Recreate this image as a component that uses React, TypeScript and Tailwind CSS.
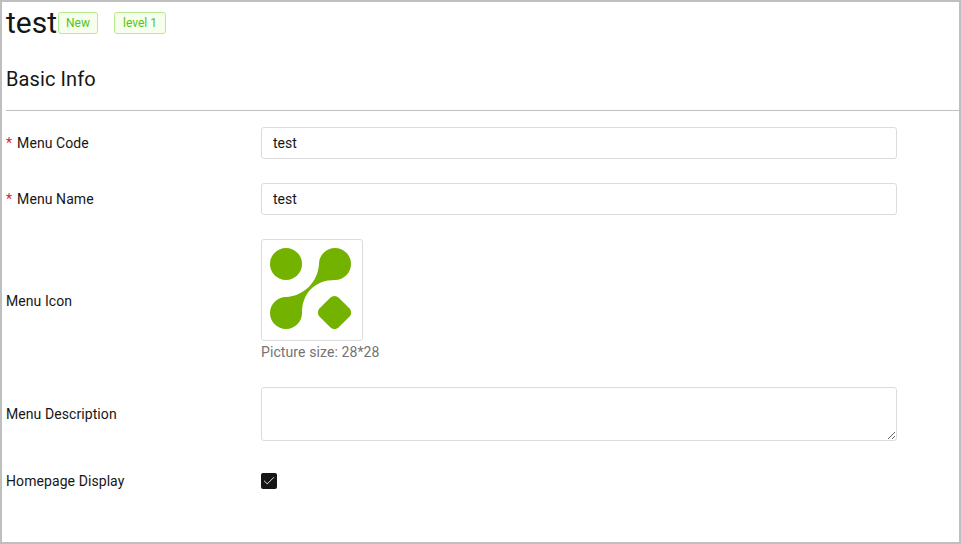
import { Check } from "lucide-react";

function Tag({ children, className }: { children: string; className?: string }) {
  return (
    <span
      className={`flex h-[22px] items-center justify-center rounded-[3px] border border-[#b7eb8f] bg-[#f6ffed] text-xs text-[#52c41a] ${className ?? ""}`}
    >
      {children}
    </span>
  );
}

function Row({
  label,
  required,
  children,
  className,
}: {
  label: string;
  required?: boolean;
  children: React.ReactNode;
  className?: string;
}) {
  return (
    <div className={`flex items-center ${className ?? ""}`}>
      <label className="w-[255px] shrink-0 text-sm tracking-[0.08px] text-[#161616]">
        {required && <span className="mr-[5px] text-[#da1e28]">*</span>}
        {label}
      </label>
      {children}
    </div>
  );
}

function TextBox({ value }: { value: string }) {
  return (
    <input
      readOnly
      value={value}
      className="h-8 w-[636px] rounded-[3px] border border-[#dcdcdc] bg-white px-[11px] text-sm text-[#161616] outline-none"
    />
  );
}

function MenuIcon() {
  return (
    <svg width="81" height="81" viewBox="0 0 81 81" fill="#74b200">
      <circle cx="16" cy="16" r="16" />
      <path d="M65 0a16 16 0 0 1 0 32C45 32 32 45 32 65a16 16 0 0 1-32 0a16 16 0 0 1 16-16C34 48 48 34 49 16a16 16 0 0 1 16-16z" />
      <rect x="51" y="51" width="27" height="27" rx="6" transform="rotate(45 64.5 64.5)" />
    </svg>
  );
}

export default function App() {
  return (
    <div
      className="h-[544px] w-[961px] overflow-hidden border-2 border-[#bfbfbf] bg-white pl-1"
      style={{ fontFamily: '"Roboto", "Liberation Sans", sans-serif' }}
    >
      <div className="flex h-[42px] items-center">
        <h1 className="w-[52px] text-[30px] leading-none font-normal text-[#161616]">test</h1>
        <div className="flex gap-4">
          <Tag className="w-10">New</Tag>
          <Tag className="w-[52px]">level 1</Tag>
        </div>
      </div>
      <h2 className="mt-[21px] text-xl leading-7 tracking-[0.1px] text-[#161616]">Basic Info</h2>
      <hr className="mt-[17px] border-t border-[#bfbfbf]" />
      <div className="mt-4 flex flex-col">
        <Row label="Menu Code" required>
          <TextBox value="test" />
        </Row>
        <Row label="Menu Name" required className="mt-6">
          <TextBox value="test" />
        </Row>
        <Row label="Menu Icon" className="mt-6">
          <div className="flex flex-col">
            <div className="h-[102px] w-[102px] rounded-[3px] border border-[#dcdcdc] p-2">
              <MenuIcon />
            </div>
            <p className="mt-[1px] text-sm leading-5 tracking-[0.1px] text-[#737373]">Picture size: 28*28</p>
          </div>
        </Row>
        <Row label="Menu Description" className="mt-[25px]">
          <textarea
            readOnly
            className="h-[54px] w-[636px] rounded-[3px] border border-[#dcdcdc] bg-white outline-none"
          />
        </Row>
        <Row label="Homepage Display" className="mt-[30px]">
          <span className="flex h-4 w-4 items-center justify-center rounded-[2px] bg-[#161616]">
            <Check size={14} strokeWidth={1.5} className="text-white" />
          </span>
        </Row>
      </div>
    </div>
  );
}
